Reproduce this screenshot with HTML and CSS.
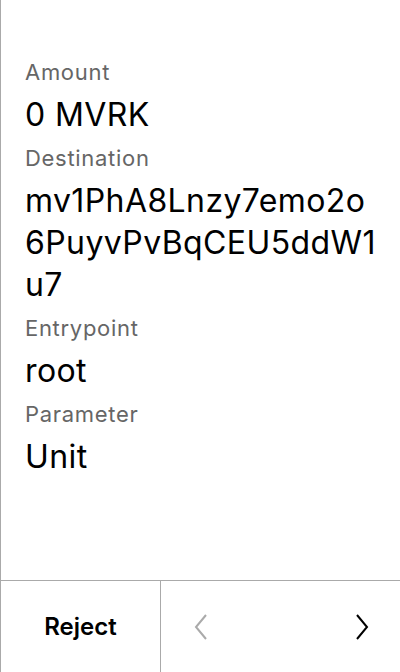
FILE: index.html
```html
<!DOCTYPE html>
<html>
<head>
<meta charset="utf-8">
<link rel="stylesheet" href="styles.css">
</head>
<body>
<div class="screen">
  <div class="content">
    <div class="label">Amount</div>
    <div class="value">0 MVRK</div>
    <div class="label">Destination</div>
    <div class="value">mv1PhA8Lnzy7emo2o<br>6PuyvPvBqCEU5ddW1<br>u7</div>
    <div class="label">Entrypoint</div>
    <div class="value">root</div>
    <div class="label">Parameter</div>
    <div class="value">Unit</div>
  </div>
  <div class="footer">
    <div class="reject">Reject</div>
    <div class="nav">
      <svg class="chev prev" width="16" height="28" viewBox="0 0 16 28"><path d="M13 2 L3 14 L13 26" fill="none" stroke="currentColor" stroke-width="2"/></svg>
      <svg class="chev next" width="16" height="28" viewBox="0 0 16 28"><path d="M3 2 L13 14 L3 26" fill="none" stroke="currentColor" stroke-width="2"/></svg>
    </div>
  </div>
</div>
</body>
</html>
```
FILE: styles.css
```css
* { box-sizing: border-box; }
html, body { margin: 0; padding: 0; background: #fff; }
body { font-family: Inter, "Noto Sans", sans-serif; }
.screen {
  width: 400px;
  height: 672px;
  border-left: 1px solid #aaa;
  display: flex;
  flex-direction: column;
}
.content {
  flex: 1;
  padding: 50px 0 0 24px;
}
.label {
  font-size: 22px;
  line-height: 44px;
  letter-spacing: 0.7px;
  color: #666;
}
.value {
  font-size: 32px;
  line-height: 42px;
  letter-spacing: 0.4px;
  color: #000;
  font-weight: 400;
}
.footer {
  height: 92px;
  border-top: 1px solid #aaa;
  display: flex;
}
.reject {
  width: 160px;
  display: flex;
  align-items: center;
  justify-content: center;
  font-size: 24px;
  font-weight: 600;
  color: #000;
  border-right: 1px solid #aaa;
}
.nav {
  flex: 1;
  display: flex;
  align-items: center;
  justify-content: space-between;
  padding: 0 30px 0 32px;
}
.chev.prev { color: #aaa; }
.chev.next { color: #000; }
```
